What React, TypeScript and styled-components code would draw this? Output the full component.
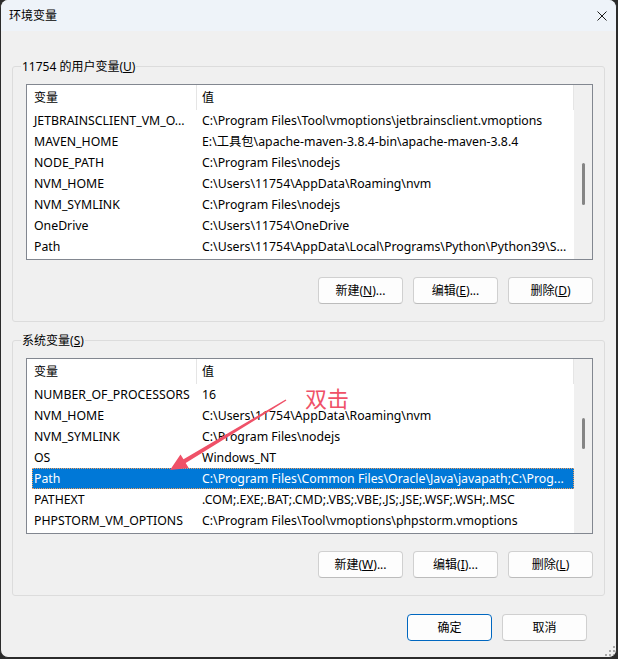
import React from 'react';
import styled, { createGlobalStyle } from 'styled-components';

const FONT = `"Noto Sans", "Noto Sans CJK SC", sans-serif`;

const GlobalStyle = createGlobalStyle`
  html, body { margin: 0; padding: 0; background: #2b2b2b; }
  body { width: 618px; height: 659px; overflow: hidden; font-family: ${FONT}; font-size: 12px; color: #000; }
  * { box-sizing: border-box; }
`;

const Window = styled.div`
  position: relative;
  width: 617px;
  height: 658px;
  background: #f0f0f0;
  border: 1px solid #2b2b2b;
  border-top: none;
  border-radius: 8px;
  overflow: hidden;
  display: flex;
  flex-direction: column;
`;

const TitleBar = styled.div`
  height: 31px;
  flex: none;
  background: #eef3f9;
  display: flex;
  align-items: center;
  justify-content: space-between;
  padding: 0 9px 0 8px;
  font-size: 12px;
`;

const Title = styled.span`
  line-height: 16px;
`;

const CloseIcon = styled.svg`
  width: 10px;
  height: 10px;
  display: block;
`;

const Main = styled.div`
  flex: 1;
  display: flex;
  flex-direction: column;
  padding: 27px 11px 0 11px;
`;

const Group = styled.fieldset<{ $gapTop?: number }>`
  margin: ${(p) => p.$gapTop ?? 0}px 0 0 0;
  padding: 0;
  min-width: 0;
  border: 1px solid #dcdcdc;
  border-radius: 3px;
`;

const Legend = styled.legend`
  margin-left: 8px;
  padding: 0 1px;
  font-size: 12px;
  line-height: 17px;
`;

const GroupBody = styled.div`
  padding: 9px 11px 17px 13px;
  display: flex;
  flex-direction: column;
`;

const ListBox = styled.div`
  display: flex;
  height: 176px;
  border: 1px solid #828790;
  background: #fff;
`;

const ListContent = styled.div`
  flex: 1;
  min-width: 0;
  display: flex;
  flex-direction: column;
`;

const Header = styled.div`
  display: flex;
  height: 25px;
  flex: none;
  border-right: 1px solid #e5e5e5;
`;

const HeaderCell = styled.div<{ $first?: boolean }>`
  line-height: 25px;
  white-space: nowrap;
  ${(p) =>
    p.$first
      ? `width: 170px; flex: none; padding-left: 7px; border-right: 1px solid #e5e5e5;`
      : `flex: 1; padding-left: 5px;`}
`;

const Rows = styled.div`
  padding-left: 5px;
  display: flex;
  flex-direction: column;
`;

const Row = styled.div<{ $selected?: boolean }>`
  display: grid;
  grid-template-columns: 164px 1fr;
  height: 21px;
  line-height: 21px;
  font-size: 12.3px;
  white-space: nowrap;
  background: ${(p) => (p.$selected ? '#0078d7' : 'transparent')};
  color: ${(p) => (p.$selected ? '#fff' : '#000')};
  outline: ${(p) => (p.$selected ? '1px dotted #f0a060' : 'none')};
  outline-offset: -1px;
`;

const NameCell = styled.span`
  padding-left: 2px;
  overflow: hidden;
`;

const ValueCell = styled.span`
  padding-left: 6px;
  overflow: hidden;
`;

const ScrollTrack = styled.div`
  width: 18px;
  flex: none;
  background: #f0f0f0;
  padding-left: 8px;
`;

const Thumb = styled.div<{ $top: number; $height: number }>`
  width: 3px;
  margin-top: ${(p) => p.$top}px;
  height: ${(p) => p.$height}px;
  background: #858585;
  border-radius: 2px;
`;

const ButtonRow = styled.div<{ $padRight?: number; $top?: number }>`
  display: flex;
  justify-content: flex-end;
  gap: 10px;
  margin-top: ${(p) => p.$top ?? 17}px;
  padding-right: ${(p) => p.$padRight ?? 0}px;
`;

const Button = styled.button<{ $default?: boolean }>`
  width: 85px;
  height: 27px;
  font-family: ${FONT};
  font-size: 12px;
  color: #000;
  background: #fdfdfd;
  border: 1px solid ${(p) => (p.$default ? '#0067c0' : '#d0d0d0')};
  border-bottom-color: ${(p) => (p.$default ? '#0067c0' : '#bcbcbc')};
  border-radius: 4px;
  padding: 0;
  line-height: 25px;
`;

const Overlay = styled.svg`
  position: absolute;
  left: -1px;
  top: 0;
  width: 618px;
  height: 659px;
  pointer-events: none;
`;

const Annotation = styled.span`
  position: absolute;
  left: 304px;
  top: 386px;
  font-family: "Noto Sans CJK SC", sans-serif;
  font-size: 22px;
  line-height: 22px;
  color: #ef5168;
`;

const Grip = styled.svg`
  position: absolute;
  right: 1px;
  bottom: 1px;
  width: 10px;
  height: 10px;
`;

type Item = { name: string; value: string; selected?: boolean };

const userVars: Item[] = [
  { name: 'JETBRAINSCLIENT_VM_O...', value: 'C:\\Program Files\\Tool\\vmoptions\\jetbrainsclient.vmoptions' },
  { name: 'MAVEN_HOME', value: 'E:\\工具包\\apache-maven-3.8.4-bin\\apache-maven-3.8.4' },
  { name: 'NODE_PATH', value: 'C:\\Program Files\\nodejs' },
  { name: 'NVM_HOME', value: 'C:\\Users\\11754\\AppData\\Roaming\\nvm' },
  { name: 'NVM_SYMLINK', value: 'C:\\Program Files\\nodejs' },
  { name: 'OneDrive', value: 'C:\\Users\\11754\\OneDrive' },
  { name: 'Path', value: 'C:\\Users\\11754\\AppData\\Local\\Programs\\Python\\Python39\\S...' },
];

const sysVars: Item[] = [
  { name: 'NUMBER_OF_PROCESSORS', value: '16' },
  { name: 'NVM_HOME', value: 'C:\\Users\\11754\\AppData\\Roaming\\nvm' },
  { name: 'NVM_SYMLINK', value: 'C:\\Program Files\\nodejs' },
  { name: 'OS', value: 'Windows_NT' },
  { name: 'Path', value: 'C:\\Program Files\\Common Files\\Oracle\\Java\\javapath;C:\\Prog...', selected: true },
  { name: 'PATHEXT', value: '.COM;.EXE;.BAT;.CMD;.VBS;.VBE;.JS;.JSE;.WSF;.WSH;.MSC' },
  { name: 'PHPSTORM_VM_OPTIONS', value: 'C:\\Program Files\\Tool\\vmoptions\\phpstorm.vmoptions' },
];

function VarList({ items, thumbTop, thumbHeight }: { items: Item[]; thumbTop: number; thumbHeight: number }) {
  return (
    <ListBox>
      <ListContent>
        <Header>
          <HeaderCell $first>变量</HeaderCell>
          <HeaderCell>值</HeaderCell>
        </Header>
        <Rows>
          {items.map((it) => (
            <Row key={it.name} $selected={it.selected}>
              <NameCell>{it.name}</NameCell>
              <ValueCell>{it.value}</ValueCell>
            </Row>
          ))}
        </Rows>
      </ListContent>
      <ScrollTrack>
        <Thumb $top={thumbTop} $height={thumbHeight} />
      </ScrollTrack>
    </ListBox>
  );
}

function Mn({ label, k, tail = '' }: { label: string; k: string; tail?: string }) {
  return (
    <>
      {label}(<u>{k}</u>){tail}
    </>
  );
}

export default function App() {
  return (
    <>
      <GlobalStyle />
      <Window>
        <TitleBar>
          <Title>环境变量</Title>
          <CloseIcon viewBox="0 0 10 10">
            <path d="M0.5 0.5 L9.5 9.5 M9.5 0.5 L0.5 9.5" stroke="#1a1a1a" strokeWidth="1" fill="none" />
          </CloseIcon>
        </TitleBar>
        <Main>
          <Group>
            <Legend>
              <Mn label="11754 的用户变量" k="U" />
            </Legend>
            <GroupBody>
              <VarList items={userVars} thumbTop={78} thumbHeight={42} />
              <ButtonRow>
                <Button><Mn label="新建" k="N" tail="..." /></Button>
                <Button><Mn label="编辑" k="E" tail="..." /></Button>
                <Button><Mn label="删除" k="D" /></Button>
              </ButtonRow>
            </GroupBody>
          </Group>
          <Group $gapTop={10}>
            <Legend>
              <Mn label="系统变量" k="S" />
            </Legend>
            <GroupBody>
              <VarList items={sysVars} thumbTop={59} thumbHeight={31} />
              <ButtonRow>
                <Button><Mn label="新建" k="W" tail="..." /></Button>
                <Button><Mn label="编辑" k="I" tail="..." /></Button>
                <Button><Mn label="删除" k="L" /></Button>
              </ButtonRow>
            </GroupBody>
          </Group>
          <ButtonRow $top={18} $padRight={18}>
            <Button $default>确定</Button>
            <Button>取消</Button>
          </ButtonRow>
        </Main>
        <Annotation>双击</Annotation>
        <Overlay viewBox="0 0 618 659">
          <polygon
            points="286.4,400.6 185.7,463.1 188.7,468 170,470 180.5,454.4 183.5,459.3 285.6,399.4"
            fill="#ef5168"
          />
        </Overlay>
        <Grip viewBox="0 0 10 10">
          <g fill="#a8a8a8">
            <rect x="8" y="0" width="2" height="2" />
            <rect x="4" y="4" width="2" height="2" />
            <rect x="8" y="4" width="2" height="2" />
            <rect x="0" y="8" width="2" height="2" />
            <rect x="4" y="8" width="2" height="2" />
            <rect x="8" y="8" width="2" height="2" />
          </g>
        </Grip>
      </Window>
    </>
  );
}
